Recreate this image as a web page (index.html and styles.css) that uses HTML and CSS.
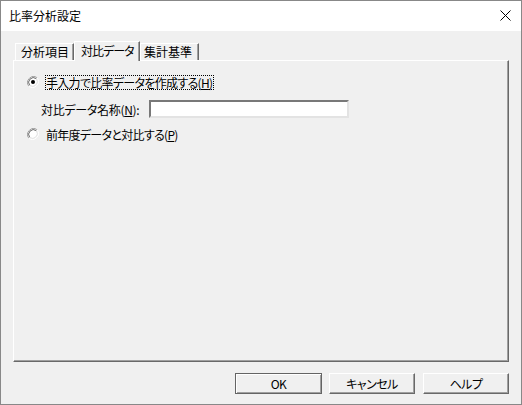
FILE: index.html
```html
<!DOCTYPE html>
<html lang="ja">

<head>
    <meta charset="UTF-8">
    <meta name="viewport" content="width=device-width, initial-scale=1.0">
    <title>比率分析設定</title>
    <!-- estilo css -->
    <link rel="stylesheet" href="styles.css">
</head>

<body>
    <!-- janela do diálogo -->
    <div class="window">
        <!-- barra de título -->
        <div class="titlebar">
            <span class="title">比率分析設定</span>
            <svg class="close" width="11" height="11" viewBox="0 0 11 11">
                <path d="M0.5 0.5 L10.5 10.5 M10.5 0.5 L0.5 10.5" stroke="#000" stroke-width="1" fill="none"/>
            </svg>
        </div>

        <!-- corpo do diálogo -->
        <div class="dialog-body">
            <!-- abas -->
            <div class="tabs">
                <div class="tab tab-first">分析項目</div>
                <div class="tab tab-active">対比データ</div>
                <div class="tab tab-last">集計基準</div>
            </div>

            <!-- painel da aba -->
            <div class="panel">
                <div class="row radio-row">
                    <svg class="radio" width="12" height="12" viewBox="0 0 12 12">
                        <path d="M10.2 1.8 A6 6 0 0 0 1.8 10.2" stroke="#a0a0a0" stroke-width="1" fill="none"/>
                        <path d="M1.8 10.2 A6 6 0 0 0 10.2 1.8" stroke="#ffffff" stroke-width="1" fill="none"/>
                        <circle cx="6" cy="6" r="4.6" fill="#fff"/>
                        <path d="M9.3 2.7 A4.7 4.7 0 0 0 2.7 9.3" stroke="#696969" stroke-width="1" fill="none"/>
                        <path d="M2.7 9.3 A4.7 4.7 0 0 0 9.3 2.7" stroke="#e3e3e3" stroke-width="1" fill="none"/>
                        <circle cx="6" cy="6" r="2" fill="#000"/>
                    </svg>
                    <span class="radio-label focused">手入力で比率データを作成する(<u>H</u>)</span>
                </div>

                <div class="row name-row">
                    <span class="field-label">対比データ名称(<u>N</u>):</span>
                    <div class="textbox"></div>
                </div>

                <div class="row radio-row">
                    <svg class="radio" width="12" height="12" viewBox="0 0 12 12">
                        <path d="M10.2 1.8 A6 6 0 0 0 1.8 10.2" stroke="#a0a0a0" stroke-width="1" fill="none"/>
                        <path d="M1.8 10.2 A6 6 0 0 0 10.2 1.8" stroke="#ffffff" stroke-width="1" fill="none"/>
                        <circle cx="6" cy="6" r="4.6" fill="#fff"/>
                        <path d="M9.3 2.7 A4.7 4.7 0 0 0 2.7 9.3" stroke="#696969" stroke-width="1" fill="none"/>
                        <path d="M2.7 9.3 A4.7 4.7 0 0 0 9.3 2.7" stroke="#e3e3e3" stroke-width="1" fill="none"/>
                    </svg>
                    <span class="radio-label">前年度データと対比する(<u>P</u>)</span>
                </div>
            </div>

            <!-- botões -->
            <div class="buttons">
                <button class="btn btn-default">OK</button>
                <button class="btn">キャンセル</button>
                <button class="btn btn-last">ヘルプ</button>
            </div>
        </div>
    </div>
</body>

</html>
```

FILE: styles.css
```css
/* corpo da página */
body {
    margin: 0;
    padding: 0;
    font-family: "Noto Sans CJK JP", "Noto Sans", sans-serif;
    font-size: 12px;
    font-feature-settings: "palt";
    color: #000;
    background: #f0f0f0;
}

/* janela */
.window {
    width: 520px;
    height: 403px;
    border: 1px solid #888888;
    background: #f0f0f0;
    display: flex;
    flex-direction: column;
}

/* barra de título */
.titlebar {
    height: 30px;
    background: #ffffff;
    display: flex;
    align-items: center;
    justify-content: space-between;
    padding: 0 10px 0 8px;
}

.title {
    line-height: 14px;
    margin-top: -1px;
}

.close {
    margin-top: -1px;
}

/* corpo */
.dialog-body {
    flex: 1;
    padding: 10px 12px 0 12px;
    display: flex;
    flex-direction: column;
}

/* abas */
.tabs {
    height: 19px;
    display: flex;
    align-items: flex-end;
    padding-left: 2px;
}

.tab {
    height: 17px;
    box-sizing: border-box;
    border-top: 1px solid #ffffff;
    border-left: 1px solid #ffffff;
    border-right: 1px solid #696969;
    box-shadow: inset -1px 0 #a0a0a0;
    line-height: 16px;
    padding-left: 5px;
}

.tab-first {
    width: 59px;
}

.tab-active {
    width: 66px;
    height: 20px;
    margin-bottom: -1px;
    padding-left: 6px;
    line-height: 17px;
    letter-spacing: -1px;
    background: #f0f0f0;
    position: relative;
    z-index: 1;
}

.tab-last {
    width: 59px;
    padding-left: 3px;
}

/* painel */
.panel {
    height: 302px;
    box-sizing: border-box;
    border-top: 1px solid #ffffff;
    border-left: 1px solid #ffffff;
    border-right: 1px solid #696969;
    border-bottom: 1px solid #696969;
    box-shadow: inset -1px -1px #a0a0a0;
    padding: 13px 13px 0 13px;
}

.row {
    display: flex;
    align-items: center;
}

.radio-row {
    height: 16px;
}

.radio {
    margin-right: 7px;
    flex: none;
}

.radio-label {
    border: 1px dotted transparent;
    line-height: 13px;
    padding: 0 1px 0 0;
    margin-left: -1px;
    letter-spacing: -0.7px;
}

.radio-label.focused {
    border-color: #000;
}

.name-row {
    height: 18px;
    margin: 10px 0 8px 14px;
}

.field-label {
    width: 108px;
    letter-spacing: -0.3px;
}

/* caixa de texto */
.textbox {
    width: 200px;
    height: 18px;
    box-sizing: border-box;
    background: #ffffff;
    border-top: 2px solid #787878;
    border-left: 2px solid #787878;
    border-right: 2px solid #e3e3e3;
    border-bottom: 2px solid #e3e3e3;
}

/* botões */
.buttons {
    display: flex;
    justify-content: flex-end;
    gap: 7px;
    margin-top: 11px;
}

.btn {
    width: 86px;
    height: 21px;
    box-sizing: border-box;
    font-family: inherit;
    font-size: 12px;
    font-feature-settings: "palt";
    background: #f0f0f0;
    border-top: 1px solid #ffffff;
    border-left: 1px solid #ffffff;
    border-right: 1px solid #696969;
    border-bottom: 1px solid #696969;
    box-shadow: inset -1px -1px #a0a0a0;
    padding: 0;
    line-height: 18px;
    letter-spacing: -0.5px;
}

.btn-default {
    width: 87px;
    border: 1px solid #646464;
    box-shadow: inset 1px 1px #ffffff, inset -1px -1px #a0a0a0;
}

.btn-last {
    margin-left: 1px;
}
```
